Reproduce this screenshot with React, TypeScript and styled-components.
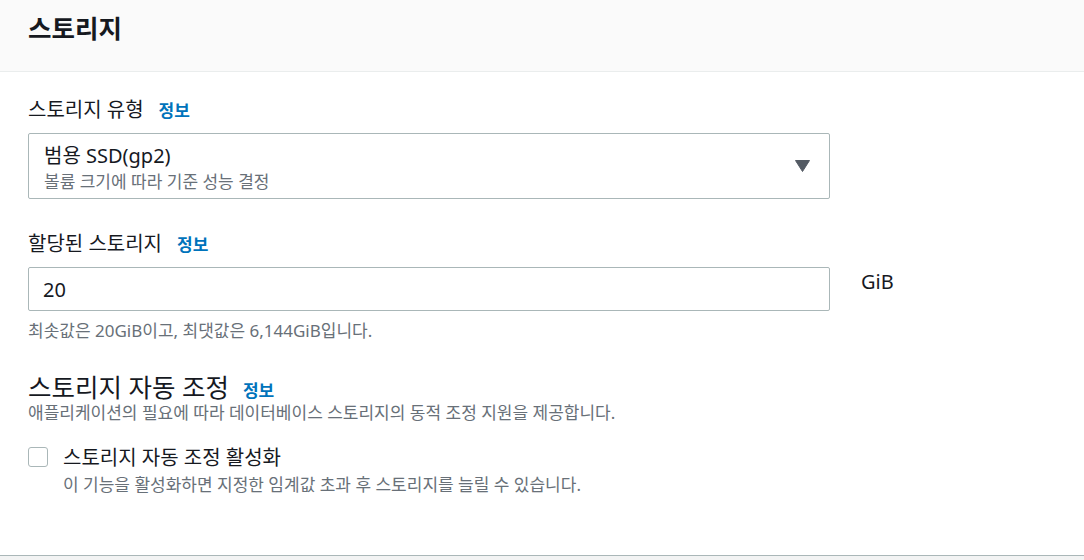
import React from "react";
import styled, { createGlobalStyle } from "styled-components";

const GlobalStyle = createGlobalStyle`
  html, body {
    margin: 0;
    padding: 0;
    background: #f2f3f3;
  }
  body {
    font-family: "Noto Sans", "Noto Sans CJK KR", sans-serif;
    color: #16191f;
  }
  * {
    box-sizing: border-box;
  }
`;

const Container = styled.section`
  background: #ffffff;
  border-bottom: 1px solid #aab7b8;
  box-shadow: 0 1px 2px rgba(0, 28, 36, 0.2);
`;

const Header = styled.header`
  height: 72px;
  padding: 12px 28px 0;
  background: #fafafa;
  border-bottom: 1px solid #eaeded;
`;

const Title = styled.h2`
  margin: 0;
  font-size: 25.5px;
  line-height: 32px;
  font-weight: 700;
`;

const Body = styled.div`
  padding: 26px 28px 58px;
  display: flex;
  flex-direction: column;
`;

const Field = styled.div<{ $gap?: number }>`
  display: flex;
  flex-direction: column;
  margin-top: ${({ $gap }) => $gap ?? 0}px;
`;

const LabelRow = styled.div`
  display: flex;
  align-items: baseline;
  height: 24px;
  margin-bottom: 11px;
`;

const Label = styled.label`
  font-size: 20px;
  line-height: 24px;
`;

const InfoLink = styled.a`
  margin-left: 15px;
  font-size: 17px;
  line-height: 24px;
  font-weight: 700;
  color: #0073bb;
  text-decoration: none;
  cursor: pointer;
`;

const ControlRow = styled.div`
  display: flex;
  align-items: flex-start;
`;

const Select = styled.div`
  width: 802px;
  height: 66px;
  display: flex;
  align-items: center;
  padding: 9px 19px 4px 15px;
  border: 1px solid #aab7b8;
  border-radius: 2px;
  background: #ffffff;
  cursor: pointer;
`;

const SelectText = styled.div`
  flex: 1;
  display: flex;
  flex-direction: column;
  align-self: stretch;
`;

const OptionLabel = styled.span`
  font-size: 20px;
  line-height: 26px;
`;

const OptionDesc = styled.span`
  font-size: 17px;
  line-height: 25px;
  color: #687078;
`;

const Caret = styled.svg`
  width: 15px;
  height: 12px;
  flex-shrink: 0;
  margin-top: -5px;
`;

const Input = styled.input`
  width: 802px;
  height: 44px;
  padding: 0 14px;
  border: 1px solid #aab7b8;
  border-radius: 2px;
  font-family: inherit;
  font-size: 20px;
  color: #16191f;
  background: #ffffff;
  outline: none;
`;

const Suffix = styled.span`
  margin: 3px 0 0 31px;
  font-size: 20px;
  line-height: 24px;
`;

const Hint = styled.div`
  margin-top: 9px;
  font-size: 17px;
  line-height: 22px;
  color: #687078;
`;

const SectionHead = styled.div`
  display: flex;
  align-items: baseline;
  height: 30px;
  margin-top: 30px;
`;

const SectionTitle = styled.h3`
  margin: 0;
  font-size: 25.5px;
  line-height: 30px;
  font-weight: 400;
`;

const SectionLink = styled(InfoLink)`
  margin-left: 14px;
  line-height: 30px;
`;

const SectionDesc = styled.div`
  font-size: 17px;
  line-height: 22px;
  color: #687078;
`;

const CheckRow = styled.label`
  display: flex;
  align-items: flex-start;
  margin-top: 21px;
  cursor: pointer;
`;

const CheckBox = styled.span`
  width: 20px;
  height: 20px;
  margin-top: 2px;
  border: 1px solid #aab7b8;
  border-radius: 3px;
  background: #ffffff;
  flex-shrink: 0;
`;

const CheckText = styled.div`
  display: flex;
  flex-direction: column;
  margin-left: 15px;
`;

const CheckLabel = styled.span`
  font-size: 20px;
  line-height: 26px;
`;

const CheckDesc = styled.span`
  margin-top: 2px;
  font-size: 17px;
  line-height: 24px;
  color: #687078;
`;

export default function App() {
  return (
    <>
      <GlobalStyle />
      <Container>
        <Header>
          <Title>스토리지</Title>
        </Header>
        <Body>
          <Field>
            <LabelRow>
              <Label>스토리지 유형</Label>
              <InfoLink>정보</InfoLink>
            </LabelRow>
            <Select>
              <SelectText>
                <OptionLabel>범용 SSD(gp2)</OptionLabel>
                <OptionDesc>볼륨 크기에 따라 기준 성능 결정</OptionDesc>
              </SelectText>
              <Caret viewBox="0 0 15 12">
                <path d="M0.5 0.5 H14.5 L7.5 11.5 Z" fill="#545b64" stroke="#545b64" strokeLinejoin="round" />
              </Caret>
            </Select>
          </Field>

          <Field $gap={33}>
            <LabelRow>
              <Label>할당된 스토리지</Label>
              <InfoLink>정보</InfoLink>
            </LabelRow>
            <ControlRow>
              <Input defaultValue="20" />
              <Suffix>GiB</Suffix>
            </ControlRow>
            <Hint>최솟값은 20GiB이고, 최댓값은 6,144GiB입니다.</Hint>
          </Field>

          <SectionHead>
            <SectionTitle>스토리지 자동 조정</SectionTitle>
            <SectionLink>정보</SectionLink>
          </SectionHead>
          <SectionDesc>
            애플리케이션의 필요에 따라 데이터베이스 스토리지의 동적 조정 지원을 제공합니다.
          </SectionDesc>

          <CheckRow>
            <CheckBox />
            <CheckText>
              <CheckLabel>스토리지 자동 조정 활성화</CheckLabel>
              <CheckDesc>
                이 기능을 활성화하면 지정한 임계값 초과 후 스토리지를 늘릴 수 있습니다.
              </CheckDesc>
            </CheckText>
          </CheckRow>
        </Body>
      </Container>
    </>
  );
}
